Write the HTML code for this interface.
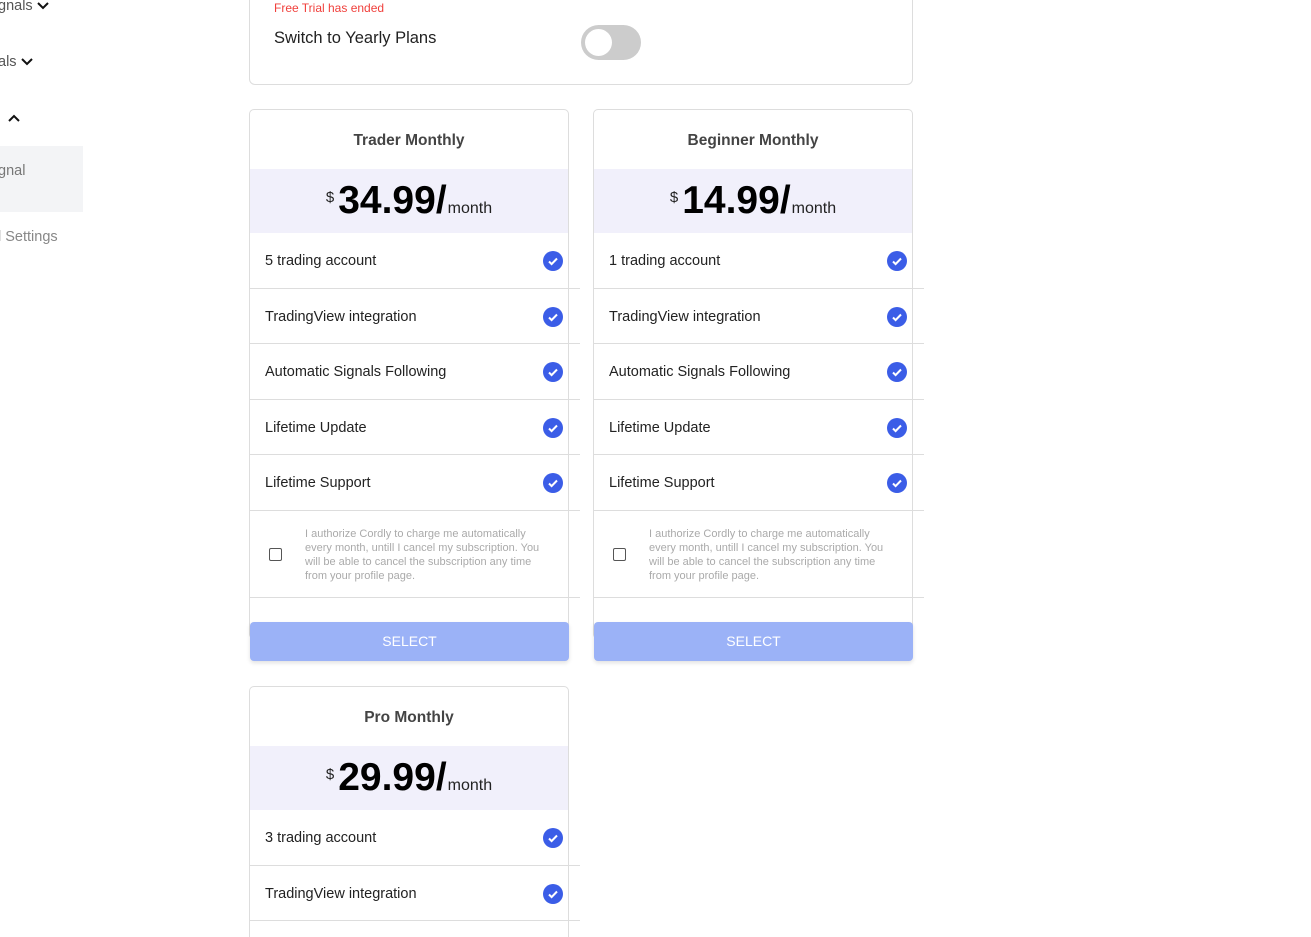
<!DOCTYPE html>
<html><head><style>
*{box-sizing:border-box;margin:0;padding:0}
html,body{width:1311px;height:937px;overflow:hidden}
body{background:#fff;font-family:"Liberation Sans",sans-serif;position:relative;color:#222}
.side{position:absolute;font-size:14.5px;color:#555}
.side svg{vertical-align:middle;margin-left:4px}
.top{position:absolute;left:249px;top:-10px;width:664px;height:95px;border:1px solid #ddd;border-radius:0 0 6px 6px}
.card{position:absolute;width:320px;border:1px solid #ddd;border-radius:5px;background:#fff;overflow:visible}
.title{height:59px;line-height:61px;text-align:center;font-weight:bold;font-size:15.5px;color:#444}
.price{height:64px;background:#f1f0fb;text-align:center;padding-top:10px;white-space:nowrap}
.price .d{font-size:15px;vertical-align:top;position:relative;top:10px;margin-right:4px}
.price .n{font-size:39px;font-weight:bold;color:#000}
.price .m{font-size:16px;color:#222;margin-left:1px}
.row{position:relative;height:55.5px;border-bottom:1px solid #ddd;width:330px;font-size:14.5px;line-height:57px;padding-left:15px;color:#222}
.row .ck{position:absolute;left:293px;top:18px;width:20px;height:20px;border-radius:50%;background:#3b5de7}
.ck svg{display:block}
.auth{position:relative;height:87px;border-bottom:1px solid #ddd;width:330px}
.auth .box{position:absolute;left:19px;top:37px;width:13px;height:13px;border:1px solid #555;border-radius:2px}
.auth p{position:absolute;left:55px;top:16px;width:250px;font-size:11px;line-height:14px;color:#aaa}
.btn{position:absolute;left:0;width:319px;height:39px;background:#9bb2f7;border-radius:4px;color:#fff;text-align:center;line-height:39px;font-size:14px;box-shadow:0 2px 4px rgba(0,0,0,.12)}
</style></head><body>
<div class="side" style="left:-2px;top:-2px">gnals<svg width="12" height="10"><path d="M1 2l5 5 5-5" stroke="#111" stroke-width="2" fill="none"/></svg></div>
<div class="side" style="left:-2px;top:54px">als<svg width="12" height="10"><path d="M1 2l5 5 5-5" stroke="#111" stroke-width="2" fill="none"/></svg></div>
<div class="side" style="left:4px;top:110px"><svg width="12" height="10"><path d="M1 8l5-5 5 5" stroke="#111" stroke-width="2" fill="none"/></svg></div>
<div style="position:absolute;left:0;top:146px;width:83px;height:66px;background:#f3f4f6"></div>
<div class="side" style="left:-2px;top:163px;color:#777">gnal</div>
<div class="side" style="left:-2px;top:229px;color:#888">l Settings</div>
<div class="top">
<div style="position:absolute;left:24px;top:10px;font-size:12px;color:#f0403c">Free Trial has ended</div>
<div style="position:absolute;left:24px;top:38px;font-size:16.5px;color:#222">Switch to Yearly Plans</div>
<div style="position:absolute;left:331px;top:34px;width:60px;height:35px;border-radius:18px;background:#ccc"><div style="position:absolute;left:4px;top:4px;width:27px;height:27px;border-radius:50%;background:#fff"></div></div>
</div>

<div class="card" style="left:249px;top:109px;height:530px">
<div class="title">Trader Monthly</div>
<div class="price"><span class="d">$</span><span class="n">34.99/</span><span class="m">month</span></div>
<div class="row">5 trading account<span class="ck"><svg width="20" height="20"><path d="M6 10.5l2.6 2.6L14 7.5" stroke="#fff" stroke-width="2" fill="none"/></svg></span></div>
<div class="row">TradingView integration<span class="ck"><svg width="20" height="20"><path d="M6 10.5l2.6 2.6L14 7.5" stroke="#fff" stroke-width="2" fill="none"/></svg></span></div>
<div class="row">Automatic Signals Following<span class="ck"><svg width="20" height="20"><path d="M6 10.5l2.6 2.6L14 7.5" stroke="#fff" stroke-width="2" fill="none"/></svg></span></div>
<div class="row">Lifetime Update<span class="ck"><svg width="20" height="20"><path d="M6 10.5l2.6 2.6L14 7.5" stroke="#fff" stroke-width="2" fill="none"/></svg></span></div>
<div class="row">Lifetime Support<span class="ck"><svg width="20" height="20"><path d="M6 10.5l2.6 2.6L14 7.5" stroke="#fff" stroke-width="2" fill="none"/></svg></span></div>
<div class="auth"><div class="box"></div><p>I authorize Cordly to charge me automatically every month, untill I cancel my subscription. You will be able to cancel the subscription any time from your profile page.</p></div>
<div class="btn" style="top:512px">SELECT</div>
</div>

<div class="card" style="left:593px;top:109px;height:530px">
<div class="title">Beginner Monthly</div>
<div class="price"><span class="d">$</span><span class="n">14.99/</span><span class="m">month</span></div>
<div class="row">1 trading account<span class="ck"><svg width="20" height="20"><path d="M6 10.5l2.6 2.6L14 7.5" stroke="#fff" stroke-width="2" fill="none"/></svg></span></div>
<div class="row">TradingView integration<span class="ck"><svg width="20" height="20"><path d="M6 10.5l2.6 2.6L14 7.5" stroke="#fff" stroke-width="2" fill="none"/></svg></span></div>
<div class="row">Automatic Signals Following<span class="ck"><svg width="20" height="20"><path d="M6 10.5l2.6 2.6L14 7.5" stroke="#fff" stroke-width="2" fill="none"/></svg></span></div>
<div class="row">Lifetime Update<span class="ck"><svg width="20" height="20"><path d="M6 10.5l2.6 2.6L14 7.5" stroke="#fff" stroke-width="2" fill="none"/></svg></span></div>
<div class="row">Lifetime Support<span class="ck"><svg width="20" height="20"><path d="M6 10.5l2.6 2.6L14 7.5" stroke="#fff" stroke-width="2" fill="none"/></svg></span></div>
<div class="auth"><div class="box"></div><p>I authorize Cordly to charge me automatically every month, untill I cancel my subscription. You will be able to cancel the subscription any time from your profile page.</p></div>
<div class="btn" style="top:512px">SELECT</div>
</div>

<div class="card" style="left:249px;top:686px;height:251px;border-bottom:none;border-radius:5px 5px 0 0">
<div class="title">Pro Monthly</div>
<div class="price"><span class="d">$</span><span class="n">29.99/</span><span class="m">month</span></div>
<div class="row">3 trading account<span class="ck"><svg width="20" height="20"><path d="M6 10.5l2.6 2.6L14 7.5" stroke="#fff" stroke-width="2" fill="none"/></svg></span></div>
<div class="row">TradingView integration<span class="ck"><svg width="20" height="20"><path d="M6 10.5l2.6 2.6L14 7.5" stroke="#fff" stroke-width="2" fill="none"/></svg></span></div>
</div>
</body></html>
